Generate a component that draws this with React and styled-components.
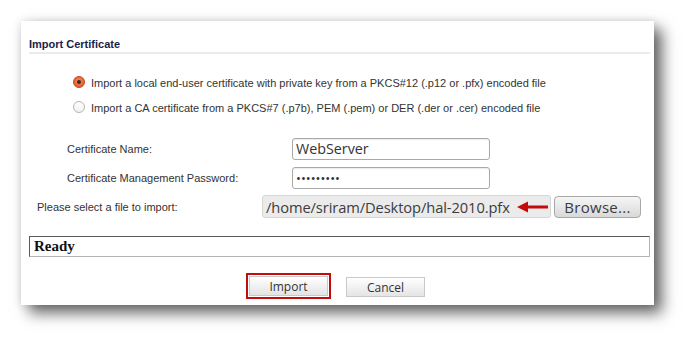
import React from "react";
import styled, { createGlobalStyle } from "styled-components";

const GlobalStyle = createGlobalStyle`
  html, body {
    margin: 0;
    padding: 0;
    background: #ffffff;
  }
`;

const Page = styled.div`
  padding: 21px 0 0 21px;
  width: 696px;
  height: 347px;
  box-sizing: border-box;
`;

const Panel = styled.div`
  width: 633px;
  height: 284px;
  box-sizing: border-box;
  background: #fff;
  padding: 16px 4px 0 8px;
  box-shadow: 8px 8px 14px rgba(0, 0, 0, 0.6), 0 0 9px rgba(0, 0, 0, 0.12);
  font-family: "Liberation Sans", Arial, sans-serif;
  color: #333;
`;

const Title = styled.h3`
  margin: 0;
  font-size: 11px;
  line-height: 14px;
  font-weight: bold;
  color: #1b1d4c;
  padding-bottom: 1px;
  border-bottom: 2px solid #ebebeb;
`;

const RadioList = styled.div`
  margin: 16px 0 14px 44px;
  display: flex;
  flex-direction: column;
`;

const RadioRow = styled.label`
  display: flex;
  align-items: center;
  height: 25px;
  font-size: 11px;
  gap: 6px;
`;

const RadioDot = styled.span`
  width: 12px;
  height: 12px;
  border-radius: 50%;
  box-sizing: border-box;
  display: flex;
  align-items: center;
  justify-content: center;
  border: 1px solid ${(p) => (p.$on ? "#c2441a" : "#b4b4b4")};
  background: ${(p) =>
    p.$on
      ? "radial-gradient(circle at 50% 40%, #f58a5c, #dd4f20)"
      : "linear-gradient(#ffffff, #f0f0f0)"};
  margin-top: -2px;

  &::after {
    content: "";
    display: ${(p) => (p.$on ? "block" : "none")};
    width: 4px;
    height: 4px;
    border-radius: 50%;
    background: #3a2a24;
  }
`;

const FieldRow = styled.div`
  display: grid;
  grid-template-columns: 225px auto;
  align-items: center;
  height: 29px;
  padding-left: ${(p) => p.$indent}px;
  font-size: 11px;
`;

const TextInput = styled.input`
  width: 198px;
  height: 22px;
  box-sizing: border-box;
  border: 1px solid #a9a9a9;
  border-radius: 3px;
  padding: 0 3px;
  font-family: "Open Sans", "DejaVu Sans", sans-serif;
  font-size: ${(p) => (p.type === "password" ? "13px" : "14.3px")};
  color: #333;
  background: #fff;
  box-shadow: inset 0 1px 1px rgba(0, 0, 0, 0.08);
  outline: none;
`;

const FilePicker = styled.div`
  display: flex;
  align-items: center;
  gap: 3px;
`;

const FileField = styled.div`
  width: 289px;
  height: 23px;
  box-sizing: border-box;
  display: flex;
  align-items: center;
  gap: 7px;
  padding: 0 0 0 3px;
  background: #ebebeb;
  border: 1px solid #d6d6d6;
  border-radius: 3px;
  font-family: "Open Sans", "DejaVu Sans", sans-serif;
  font-size: 14.7px;
  letter-spacing: -0.1px;
  color: #3c3c3c;
  white-space: nowrap;
  overflow: hidden;
`;

const BrowseButton = styled.button`
  width: 87px;
  height: 22px;
  box-sizing: border-box;
  border: 1px solid #a8a8a8;
  border-radius: 4px;
  background: linear-gradient(#f6f6f6, #d9d9d9);
  font-family: "Open Sans", "DejaVu Sans", sans-serif;
  font-size: 15px;
  color: #3c3c3c;
  padding: 0;
  letter-spacing: 0.3px;
`;

const StatusBox = styled.div`
  margin-top: 15px;
  height: 21px;
  box-sizing: border-box;
  border: 1px solid #b4b4b4;
  border-top-color: #5a5a5a;
  border-left-color: #5a5a5a;
  padding-left: 4px;
  display: flex;
  align-items: center;
  font-family: "Liberation Serif", "Times New Roman", serif;
  font-weight: bold;
  font-size: 15px;
  color: #111;
`;

const ButtonBar = styled.div`
  margin-top: 16px;
  padding-left: 217px;
  display: flex;
  align-items: center;
  gap: 15px;
`;

const Highlight = styled.div`
  border: 2px solid #c00d0d;
  padding: 1px;
  display: flex;
`;

const ActionButton = styled.button`
  width: 79px;
  height: 20px;
  box-sizing: border-box;
  border: 1px solid #c9c9c9;
  background: linear-gradient(#ffffff, #e4e4e4);
  font-family: "Open Sans", "DejaVu Sans", sans-serif;
  font-size: 12px;
  color: #333;
  padding: 0;
  margin-top: ${(p) => (p.$shift ? "2px" : "0")};
`;

const Arrow = () => (
  <svg width="31" height="12" viewBox="0 0 31 12">
    <path d="M0 6 L11 0.5 L11 4.5 L31 4.5 L31 7.5 L11 7.5 L11 11.5 Z" fill="#c40b0b" />
  </svg>
);

export default function App() {
  return (
    <Page>
      <GlobalStyle />
      <Panel>
        <Title>Import Certificate</Title>
        <RadioList>
          <RadioRow>
            <RadioDot $on />
            Import a local end-user certificate with private key from a PKCS#12 (.p12 or .pfx) encoded file
          </RadioRow>
          <RadioRow>
            <RadioDot />
            Import a CA certificate from a PKCS#7 (.p7b), PEM (.pem) or DER (.der or .cer) encoded file
          </RadioRow>
        </RadioList>
        <FieldRow $indent={38}>
          <span>Certificate Name:</span>
          <TextInput type="text" defaultValue="WebServer" readOnly />
        </FieldRow>
        <FieldRow $indent={38}>
          <span>Certificate Management Password:</span>
          <TextInput type="password" defaultValue="123456789" readOnly />
        </FieldRow>
        <FieldRow $indent={8}>
          <span>Please select a file to import:</span>
          <FilePicker>
            <FileField>
              <span>/home/sriram/Desktop/hal-2010.pfx</span>
              <Arrow />
            </FileField>
            <BrowseButton>Browse...</BrowseButton>
          </FilePicker>
        </FieldRow>
        <StatusBox>Ready</StatusBox>
        <ButtonBar>
          <Highlight>
            <ActionButton>Import</ActionButton>
          </Highlight>
          <ActionButton $shift>Cancel</ActionButton>
        </ButtonBar>
      </Panel>
    </Page>
  );
}
